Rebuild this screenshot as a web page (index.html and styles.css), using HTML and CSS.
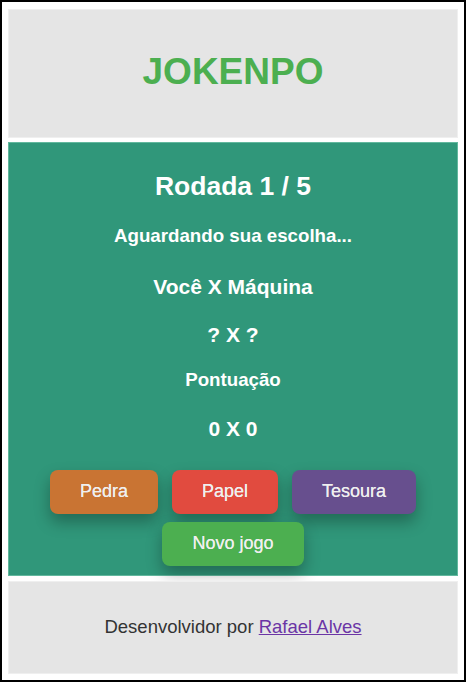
FILE: index.html
```html
<!DOCTYPE html>
<html lang="pt-BR">
<head>
<meta charset="utf-8">
<title>Jokenpo</title>
<link rel="stylesheet" href="styles.css">
</head>
<body>
  <header class="topo">
    <h1 class="titulo">JOKENPO</h1>
  </header>
  <main class="jogo">
    <h2 class="rodada">Rodada 1 / 5</h2>
    <h3 class="status">Aguardando sua escolha...</h3>
    <p class="linha linha-jogadores">Você X Máquina</p>
    <p class="linha linha-escolhas">? X ?</p>
    <h3 class="status status-pontos">Pontuação</h3>
    <p class="linha linha-placar">0 X 0</p>
    <div class="botoes">
      <button class="btn btn-pedra">Pedra</button>
      <button class="btn btn-papel">Papel</button>
      <button class="btn btn-tesoura">Tesoura</button>
    </div>
    <div class="botoes botoes-novo">
      <button class="btn btn-novo">Novo jogo</button>
    </div>
  </main>
  <footer class="rodape">
    <p class="credito">Desenvolvidor por <a class="autor" href="#">Rafael Alves</a></p>
  </footer>
</body>
</html>
```

FILE: styles.css
```css
* {
  box-sizing: border-box;
}

html {
  height: 100%;
}

body {
  margin: 0;
  min-height: 100vh;
  border: 2px solid #000;
  padding: 7px 6px 6px 6px;
  background: #ffffff;
  font-family: "Liberation Sans", Arial, sans-serif;
  display: flex;
  flex-direction: column;
}

.topo {
  background: #e5e5e5;
  border: 1px solid #efefef;
  padding: 40px 0 43px;
  text-align: center;
}

.titulo {
  margin: 0;
  font-size: 37px;
  line-height: 1.2;
  font-weight: bold;
  color: #4caf50;
}

.jogo {
  margin-top: 4px;
  background: #30977a;
  border: 1px solid #62b89e;
  padding: 28px 0 9px;
  color: #ffffff;
  text-align: center;
  display: flex;
  flex-direction: column;
  align-items: center;
}

.rodada {
  margin: 0;
  font-size: 26.5px;
  line-height: 1.2;
  font-weight: bold;
}

.status {
  margin: 22px 0 0;
  font-size: 18.72px;
  line-height: 1.2;
  font-weight: bold;
}

.linha {
  margin: 23px 0 0;
  font-size: 21px;
  line-height: 1.2;
  font-weight: bold;
}

.linha-jogadores {
  margin-top: 26px;
}

.status-pontos {
  margin-top: 22px;
}

.linha-placar {
  margin-top: 25px;
}

.botoes {
  margin-top: 28px;
  display: flex;
  justify-content: center;
  gap: 14px;
}

.botoes-novo {
  margin-top: 8px;
}

.btn {
  height: 44px;
  padding: 0 30px;
  border: none;
  border-radius: 8px;
  font-family: "Liberation Sans", Arial, sans-serif;
  font-size: 18px;
  color: #efefef;
  text-shadow: 0 0 0.4px #efefef;
  cursor: pointer;
  box-shadow: 0 8px 16px rgba(0, 0, 0, 0.3);
}

.btn-pedra {
  background: #c97433;
}

.btn-papel {
  background: #e14b3f;
}

.btn-tesoura {
  background: #674f8e;
}

.btn-novo {
  background: #4caf50;
}

.rodape {
  margin-top: 5px;
  background: #e5e5e5;
  border: 1px solid #efefef;
  padding: 34px 0 35px;
  text-align: center;
  flex: 1;
  display: flex;
  align-items: center;
  justify-content: center;
}

.credito {
  margin: 0;
  font-size: 18.5px;
  line-height: 1.2;
  color: #333333;
}

.autor {
  color: #6b35a5;
  text-decoration: underline;
}
```
